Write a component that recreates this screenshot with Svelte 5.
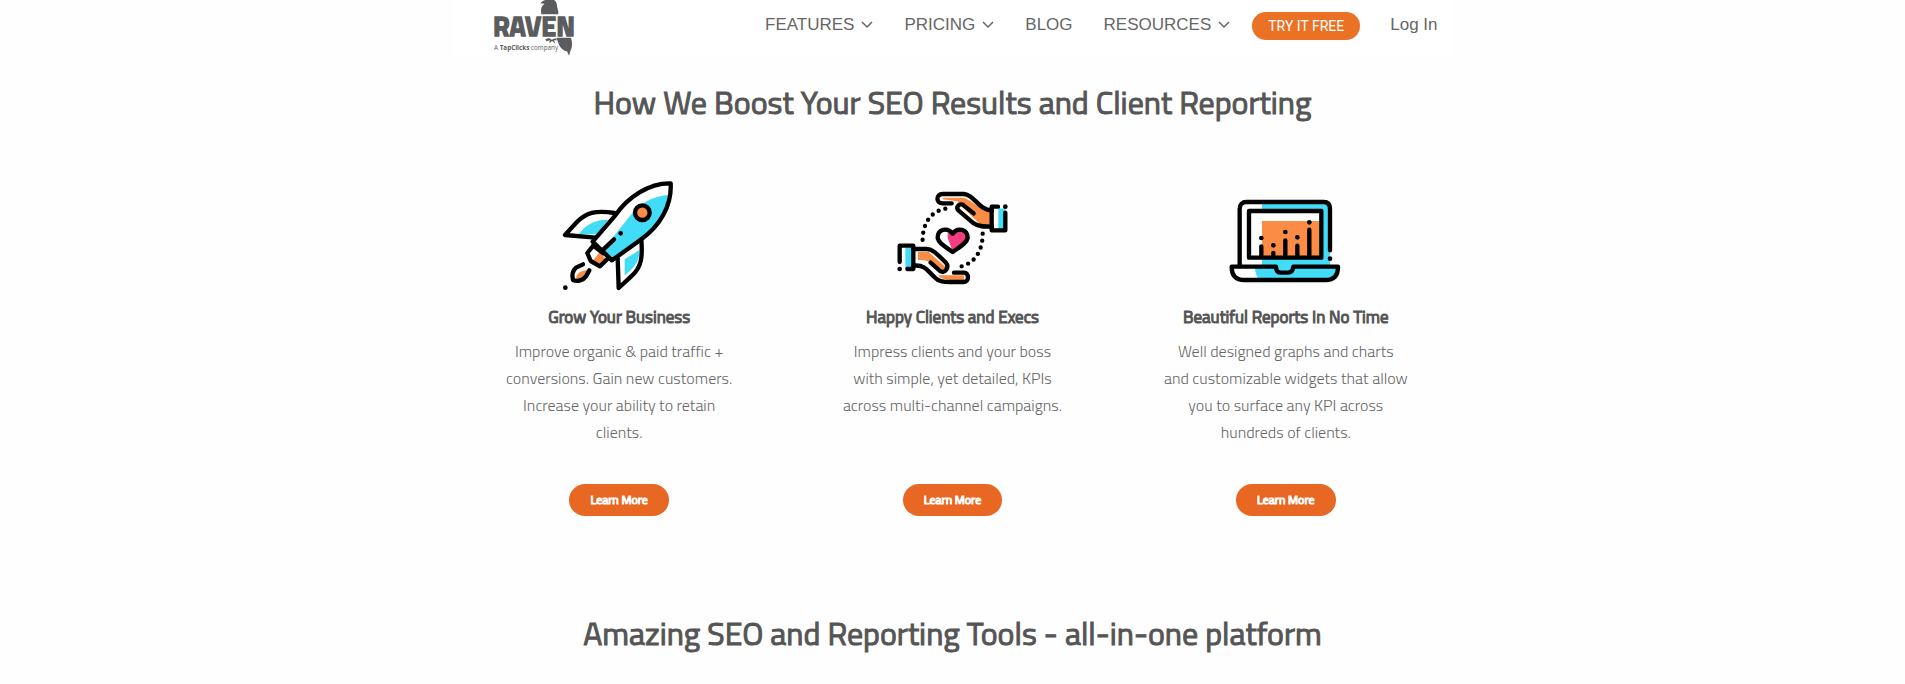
<script>
  const nav = [
    { label: 'FEATURES', menu: true },
    { label: 'PRICING', menu: true },
    { label: 'BLOG', menu: false },
    { label: 'RESOURCES', menu: true }
  ];

  const features = [
    {
      icon: 'rocket',
      title: 'Grow Your Business',
      lines: [
        'Improve organic & paid traffic +',
        'conversions. Gain new customers.',
        'Increase your ability to retain',
        'clients.'
      ]
    },
    {
      icon: 'hands',
      title: 'Happy Clients and Execs',
      lines: [
        'Impress clients and your boss',
        'with simple, yet detailed, KPIs',
        'across multi-channel campaigns.'
      ]
    },
    {
      icon: 'laptop',
      title: 'Beautiful Reports In No Time',
      lines: [
        'Well designed graphs and charts',
        'and customizable widgets that allow',
        'you to surface any KPI across',
        'hundreds of clients.'
      ]
    }
  ];
</script>

<header class="site-header">
  <a class="logo" href="/" aria-label="Raven, a TapClicks company">
    <svg width="84" height="58" viewBox="39 0 252 174" aria-hidden="true">
      <g fill="#5b5c5e">
        <path d="M196 0 H222 C228 4 231 10 231 18 C232 26 236 32 235 43 H184 C181 28 184 18 193 11 L181 10 C184 5 190 2 196 0 Z" />
        <text class="wordmark" x="39" y="109">RAVEN</text>
        <path d="M229 113 H273 C278 128 277 142 272 151 L267 167 L261 154 C249 153 239 142 234 127 Z" />
        <path d="M196 118 L207 114 L215 119 L226 115 L232 121 L222 121 L226 131 L217 123 L207 129 L210 121 L199 124 Z" />
        <text class="tagline" x="42" y="150">A <tspan class="strong">TapClicks</tspan> company</text>
      </g>
    </svg>
  </a>

  <nav class="main-nav">
    {#each nav as item}
      <a class="nav-link" href="/{item.label.toLowerCase()}">
        {item.label}
        {#if item.menu}
          <svg width="12" height="8" viewBox="0 0 12 8" fill="none" aria-hidden="true">
            <path d="M1 1 L6 6 L11 1" stroke="currentColor" stroke-width="1.5" />
          </svg>
        {/if}
      </a>
    {/each}
    <a class="try" href="/trial">TRY IT FREE</a>
    <a class="login" href="/login">Log In</a>
  </nav>
</header>

<main>
  <h1>How We Boost Your SEO Results and Client Reporting</h1>

  <section class="features">
    {#each features as feature}
      <article class="feature">
        {#if feature.icon === 'rocket'}
          <svg class="icon" viewBox="36 24 342 342" aria-hidden="true">
            <path d="M354 75 C350 130 330 165 274 208 L188 268 L156 243 L256 118 C285 92 318 78 354 75 Z" fill="#42dcf8" />
            <path d="M86 193 C105 165 135 148 174 149 L142 193 Z" fill="#42dcf8" />
            <path d="M224 268 L268 240 C270 270 255 292 224 316 Z" fill="#42dcf8" />
            <path d="M148 248 L166 264 L150 284 L130 270 Z" fill="#fa8c46" />
            <path d="M78 326 C80 308 96 300 116 300 C112 320 100 330 78 326 Z" fill="#fa8c46" />
            <g class="line">
              <path d="M128 215 L196 136 C232 82 298 38 362 40 C366 106 330 168 274 208 L186 271 Z" />
              <path d="M194 129 C135 120 108 128 80 157 L45 195 L136 203" />
              <path d="M274 208 C278 262 275 290 246 317 L206 354 L203 264" />
              <path d="M130 227 L112 249 L122 273 L150 289 L173 266" />
              <path d="M130 227 L160 250" />
              <path d="M154 244 L192 208" />
              <path d="M99 283 L78 293 C68 302 65 315 69 330 C83 336 99 331 108 319 L118 301" />
              <circle cx="277" cy="128" r="22" fill="#fa8c46" />
            </g>
            <circle cx="212" cy="190" r="7" />
            <circle cx="46" cy="353" r="7" />
          </svg>
        {:else if feature.icon === 'hands'}
          <svg class="icon" viewBox="31 -6 342 342" aria-hidden="true">
            <path d="M174 53 H238 C278 70 285 94 322 94 V138 H292 L226 74 L218 64 L174 58 Z" fill="#fa8c46" />
            <path d="M100 216 H132 L184 262 L181 276 L160 270 C138 242 125 240 100 240 Z" fill="#fa8c46" />
            <path d="M160 286 H238 V300 H200 C180 300 170 296 160 286 Z" fill="#fa8c46" />
            <rect x="341" y="86" width="20" height="62" fill="#42dcf8" />
            <rect x="62" y="203" width="19" height="60" fill="#42dcf8" />
            <path d="M204 158 C224 140 250 150 249 174 C246 189 224 202 204 214 L189 174 V158 Z" fill="#f83c80" />
            <g class="line">
              <path d="M201 70 H174 C153 70 153 42 174 42 H238 C270 44 280 90 322 91" />
              <path d="M267 100 L234 74 C220 70 213 84 222 92 L267 130 C280 140 300 140 322 140" />
              <path d="M340 80 H321 V151 H362 V98" />
              <path d="M86 207 H126 C146 207 158 224 183 247 C196 262 180 282 166 273 L138 248" />
              <path d="M86 257 C124 252 132 278 150 292 C162 306 180 306 196 306 H238 C254 306 254 278 238 278 H208" />
              <path d="M45 246 V197 H86 V267 H68" />
              <path d="M204 161 C188 140 158 148 159 174 C163 192 184 201 204 216 C224 201 246 190 249 174 C249 148 219 140 204 161 Z" />
            </g>
            <path class="dots" d="M182 86 C130 96 112 142 114 188" />
            <path class="dots" d="M294 161 C294 220 264 254 222 261" />
            <circle cx="362" cy="80" r="7" />
            <circle cx="45" cy="267" r="7" />
          </svg>
        {:else}
          <svg class="icon" viewBox="42 -21 342 342" aria-hidden="true">
            <path d="M141 56 H330 C340 56 345 63 345 75 V240 H368 C366 268 356 284 334 284 H134 C126 276 120 264 120 248 H141 Z" fill="#42dcf8" />
            <rect x="102" y="78" width="217" height="140" fill="#fff" />
            <rect x="141" y="108" width="172" height="108" fill="#fa8c46" />
            <g class="line">
              <path d="M74 244 V72 C74 58 82 51 94 51 H326 C338 51 345 58 345 72 V196" />
              <rect x="102" y="78" width="217" height="140" />
              <path d="M50 245 H183 C183 258 190 263 199 263 H218 C228 263 234 258 235 245 H369 C369 270 357 285 332 285 H88 C62 285 50 270 50 245 Z" />
              <path d="M139 184 V214 M175 204 V214 M211 166 V214 M247 182 V214 M283 134 V214" />
            </g>
            <circle cx="139" cy="159" r="7" />
            <circle cx="175" cy="181" r="7" />
            <circle cx="211" cy="141" r="7" />
            <circle cx="247" cy="157" r="7" />
            <circle cx="283" cy="112" r="7" />
            <circle cx="345" cy="221" r="7" />
          </svg>
        {/if}

        <h2>{feature.title}</h2>
        <p>
          {#each feature.lines as line, i}
            {#if i > 0}<br />{/if}{line}
          {/each}
        </p>
        <a class="more" href="/features">Learn More</a>
      </article>
    {/each}
  </section>

  <h1>Amazing SEO and Reporting Tools - all-in-one platform</h1>
</main>

<style>
  :global(body) {
    background: #fefefe;
  }

  .site-header {
    display: flex;
    justify-content: space-between;
    box-sizing: border-box;
    max-width: 1000px;
    margin: 0 auto;
    padding: 0 15px 0 40px;
    background: #fff;
  }

  .logo svg {
    display: block;
    overflow: visible;
  }

  .wordmark {
    font: 700 81px 'Titillium Web', Roboto, sans-serif;
    stroke: #5b5c5e;
    stroke-width: 4px;
  }

  .tagline {
    font: 19px 'Open Sans', sans-serif;
  }

  .strong {
    font-weight: 700;
  }

  .main-nav {
    display: flex;
    align-items: center;
    height: 50px;
    font-family: 'Liberation Sans', Arial, sans-serif;
    font-size: 17px;
    white-space: nowrap;
  }

  .main-nav a {
    text-decoration: none;
  }

  .nav-link {
    display: flex;
    align-items: center;
    gap: 7px;
    margin-right: 31px;
    color: #666;
  }

  .try {
    margin: 2px 30px 0 -9px;
    padding: 0 16px;
    border-radius: 14px;
    background: #eb7125;
    color: #fff;
    font-family: Roboto, sans-serif;
    font-size: 14px;
    line-height: 28px;
  }

  .login {
    color: #666;
  }

  main {
    max-width: 1000px;
    margin: 0 auto;
    font-family: 'Titillium Web', Roboto, sans-serif;
    text-align: center;
  }

  h1 {
    margin: 0;
    padding-top: 19px;
    color: #555;
    font-size: 32px;
    font-weight: 400;
    line-height: 50px;
    -webkit-text-stroke: 1px;
  }

  .features {
    display: grid;
    grid-template-columns: repeat(3, 1fr);
    padding: 51px 0 73px;
  }

  .feature {
    display: flex;
    flex-direction: column;
    align-items: center;
  }

  .icon {
    width: 114px;
    height: 114px;
  }

  .line {
    fill: none;
    stroke: #000;
    stroke-width: 13;
    stroke-linecap: round;
    stroke-linejoin: round;
  }

  .dots {
    fill: none;
    stroke: #000;
    stroke-width: 13;
    stroke-linecap: round;
    stroke-dasharray: 0 21;
  }

  h2 {
    margin: 12px 0 8px;
    color: #555;
    font-size: 17px;
    font-weight: 400;
    line-height: 26px;
    -webkit-text-stroke: 1px;
  }

  p {
    min-height: 108px;
    margin: 0 0 38px;
    color: #666;
    font-size: 16px;
    font-weight: 300;
    line-height: 27px;
  }

  .more {
    padding: 0 21px;
    border-radius: 16px;
    background: #e86722;
    color: #fff;
    font-size: 12px;
    font-weight: 400;
    line-height: 32px;
    text-decoration: none;
    -webkit-text-stroke: 1px;
  }
</style>
